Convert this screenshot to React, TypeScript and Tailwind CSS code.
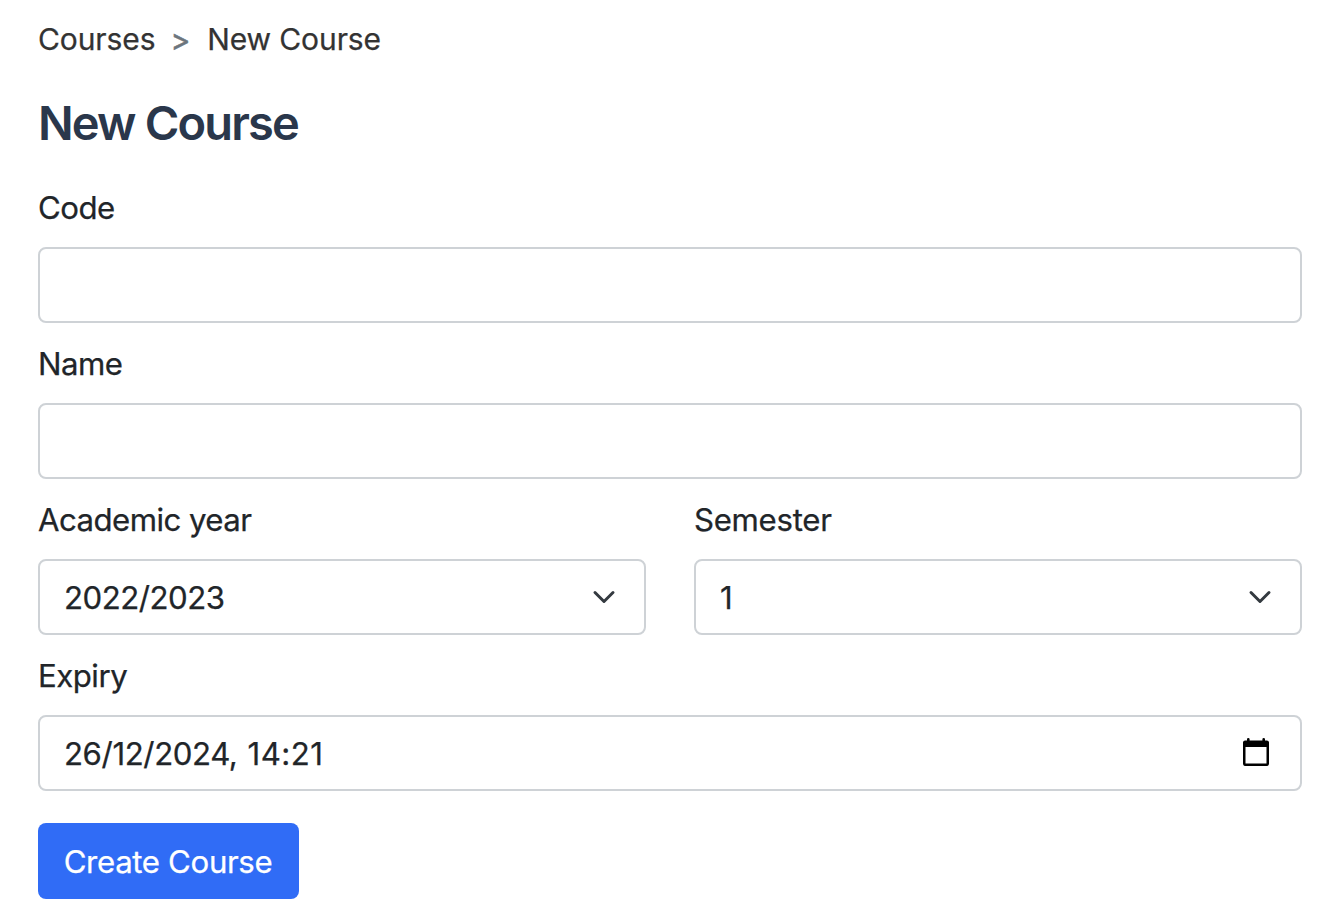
import type { ReactNode } from "react";

const box =
  "flex h-[76px] w-full items-center justify-between rounded-lg border-2 border-[#ced2d6] bg-white px-6 outline-none";

function Field({ label, tracking, children }: { label: string; tracking: string; children: ReactNode }) {
  return (
    <div className="flex min-w-0 flex-1 flex-col gap-[15px]">
      <label className={`flex h-12 items-center ${tracking}`}>{label}</label>
      {children}
    </div>
  );
}

function Chevron() {
  return (
    <svg viewBox="0 0 16 16" className="h-6 w-8" fill="none" stroke="#343a40" strokeWidth="2" strokeLinecap="round" strokeLinejoin="round">
      <path d="m2 5 6 6 6-6" />
    </svg>
  );
}

function Calendar() {
  return (
    <svg viewBox="0 0 26 28" className="mr-[7px] mb-0.5 h-7 w-[26px]" fill="#000" fillRule="evenodd">
      <path d="M4 1.3a1.3 1.3 0 0 1 2.6 0V2.5h12.8V1.3a1.3 1.3 0 0 1 2.6 0V2.5h1.5A2.3 2.3 0 0 1 26 5v20.7a2.3 2.3 0 0 1-2.5 2.3h-21A2.3 2.3 0 0 1 0 25.7V5a2.3 2.3 0 0 1 2.5-2.5H4ZM2.5 9v16.5h21V9Z" />
    </svg>
  );
}

export default function App() {
  return (
    <main className="flex h-[922px] w-full flex-col items-start bg-white pt-4 pr-10 pl-[38px] font-['Inter',sans-serif] text-[31.2px] leading-[48px] text-[#212529] [-webkit-text-stroke:0.25px]">
      <nav className="flex h-12 items-center pb-0.5 text-[30px] leading-[46px] tracking-[-0.1px] text-[#333]">
        <span>Courses</span>
        <span className="mr-[17px] ml-[15px] pt-0.5 text-[#6c757d] [-webkit-text-stroke:0.5px]">&gt;</span>
        <span>New Course</span>
      </nav>
      <h1 className="mt-[31px] h-14 text-[47px] leading-[56px] font-semibold tracking-[-1.85px] text-[#2a374b] [-webkit-text-stroke:0px]">New Course</h1>
      <form className="mt-[33px] flex w-full flex-col gap-[17px]">
        <Field label="Code" tracking="tracking-[-0.5px]">
          <input className={box} />
        </Field>
        <Field label="Name" tracking="tracking-[-0.5px]">
          <input className={box} />
        </Field>
        <div className="flex gap-12">
          <Field label="Academic year" tracking="tracking-[-0.55px]">
            <div className={box}>
              <span className="pt-0.5 tracking-[-0.5px]">2022/2023</span>
              <Chevron />
            </div>
          </Field>
          <Field label="Semester" tracking="tracking-[-0.3px]">
            <div className={box}>
              <span className="pt-0.5">1</span>
              <Chevron />
            </div>
          </Field>
        </div>
        <Field label="Expiry" tracking="tracking-[-0.5px]">
          <div className={box}>
            <span className="flex gap-2.5 pt-0.5">
              <span className="tracking-[-0.4px]">26/12/2024,</span>
              <span className="tracking-[0.5px]">14:21</span>
            </span>
            <Calendar />
          </div>
        </Field>
        <button type="button" className="mt-[15px] h-[76px] w-[261px] rounded-lg bg-[#306cf6] pt-0.5 pr-px tracking-[-0.35px] text-white">
          Create Course
        </button>
      </form>
    </main>
  );
}
